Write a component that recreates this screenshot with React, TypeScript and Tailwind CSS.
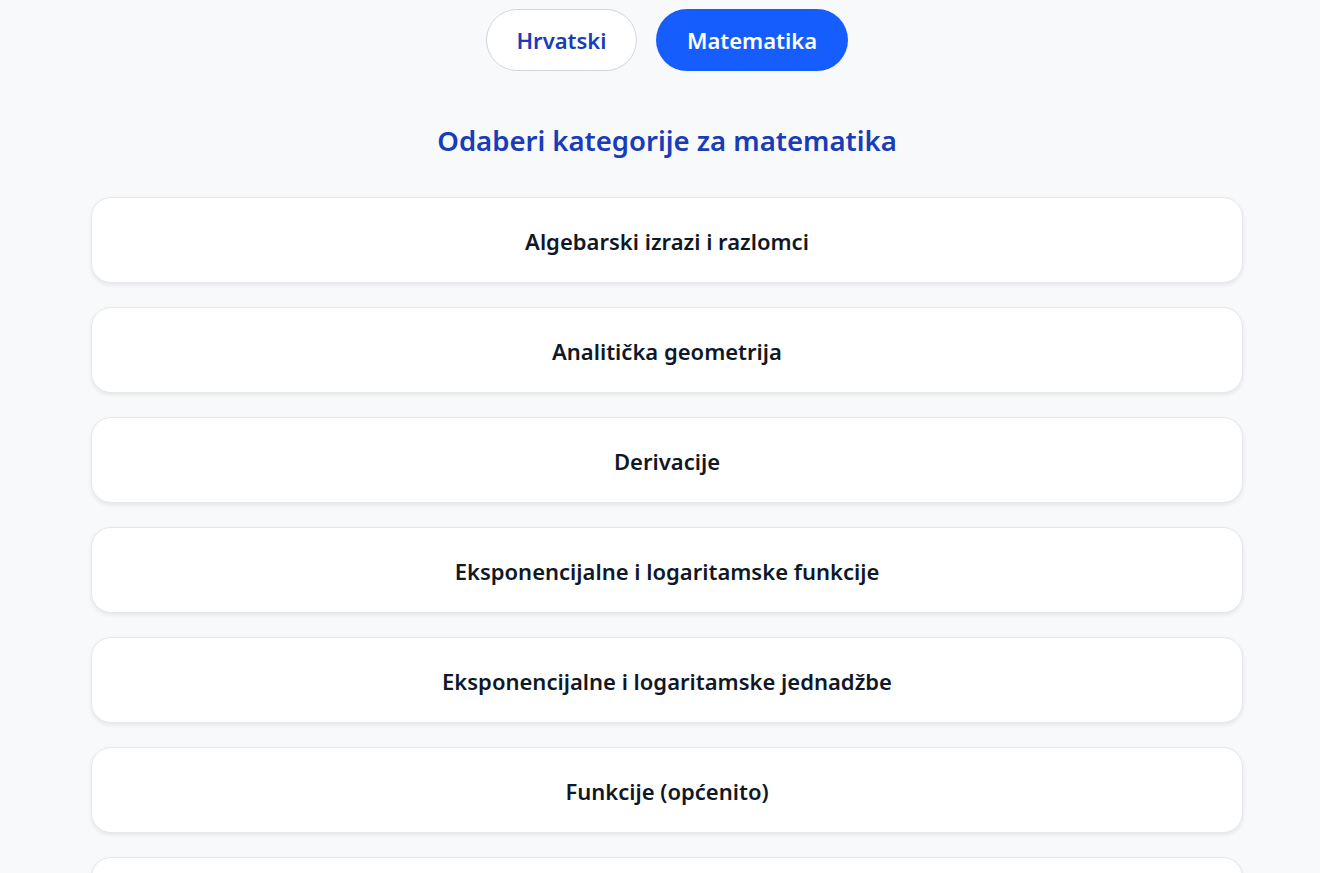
import React, { useState } from 'react';

const categories = [
  "Algebarski izrazi i razlomci",
  "Analitička geometrija",
  "Derivacije",
  "Eksponencijalne i logaritamske funkcije",
  "Eksponencijalne i logaritamske jednadžbe",
  "Funkcije (općenito)",
  "Geometrija",
];

export default function App() {
  const [subject, setSubject] = useState("matematika");

  return (
    <div className="min-h-screen bg-[#f8f9fb] pl-[14px] font-['Noto_Sans',sans-serif]">
      <div className="mx-auto w-[1152px] pt-[9px]">
        {/* Subject switch */}
        <div className="flex justify-center gap-[19px]">
          <button
            onClick={() => setSubject("hrvatski")}
            className={
              subject === "hrvatski"
                ? "h-[62px] w-[151px] rounded-full bg-[#155dfc] text-[22px] font-semibold text-white"
                : "h-[62px] w-[151px] rounded-full border border-gray-300 bg-white text-[22px] font-semibold text-[#193cb8]"
            }
          >
            Hrvatski
          </button>
          <button
            onClick={() => setSubject("matematika")}
            className={
              subject === "matematika"
                ? "h-[62px] w-[192px] rounded-full bg-[#155dfc] text-[22px] font-semibold text-white"
                : "h-[62px] w-[192px] rounded-full border border-gray-300 bg-white text-[22px] font-semibold text-[#193cb8]"
            }
          >
            Matematika
          </button>
        </div>

        <h2 className="mt-[50px] text-center text-[27.5px] font-semibold leading-[40px] text-[#193cb8]">
          Odaberi kategorije za {subject}
        </h2>

        <div className="mt-[36px] flex flex-col gap-[24px]">
          {categories.map((c) => (
            <button
              key={c}
              className="flex h-[86px] w-full items-center justify-center rounded-[20px] border border-gray-200 bg-white pt-[3px] text-[22px] font-semibold text-gray-900 shadow-[0_2px_4px_rgba(0,0,0,0.08)]"
            >
              {c}
            </button>
          ))}
        </div>
      </div>
    </div>
  );
}
